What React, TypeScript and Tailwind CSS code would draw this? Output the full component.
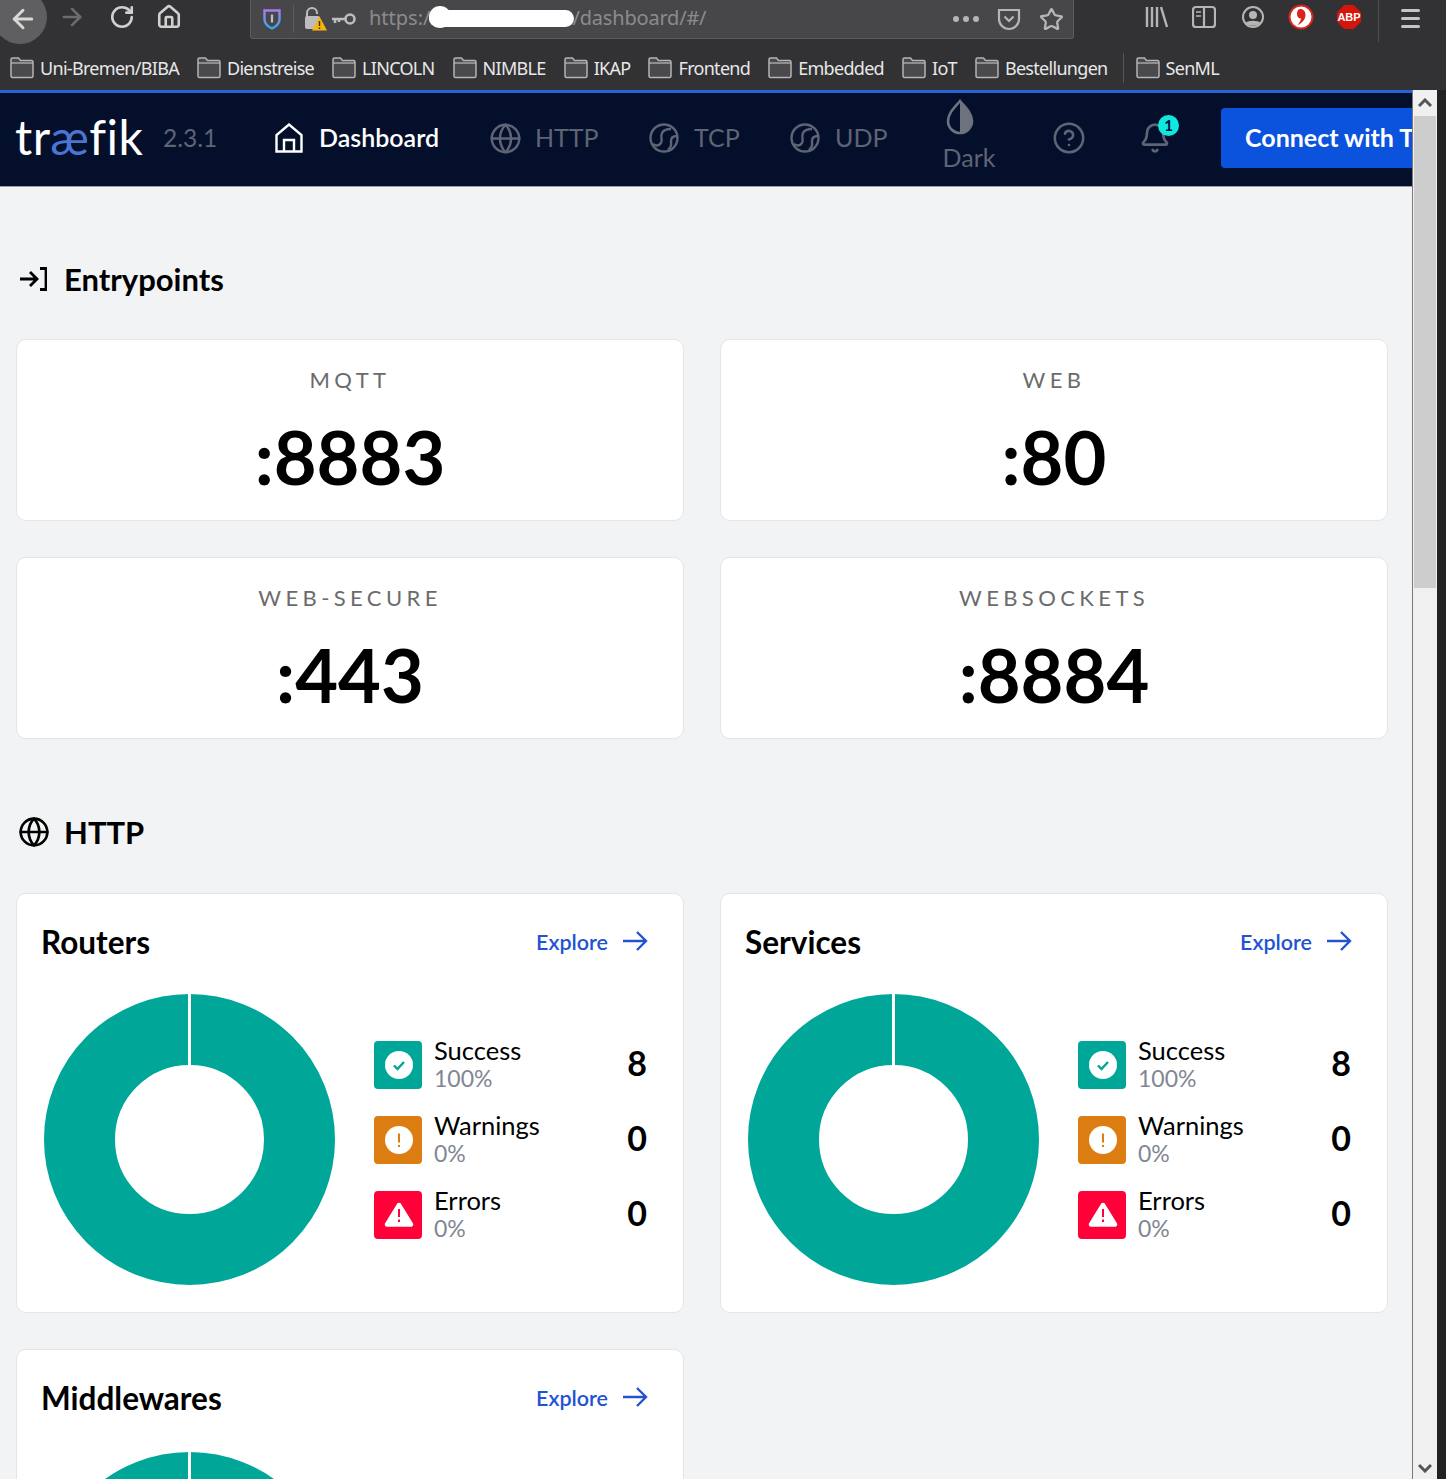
import React from 'react';
import { ArrowLeft, ArrowRight, Bell, CircleHelp, Globe, House, RotateCw, Star } from 'lucide-react';

const BOOKMARKS = ['Uni-Bremen/BIBA', 'Dienstreise', 'LINCOLN', 'NIMBLE', 'IKAP', 'Frontend', 'Embedded', 'IoT', 'Bestellungen'];

function Folder() {
  return (
    <svg width="24" height="22" viewBox="0 0 24 22" fill="none" className="shrink-0">
      <path d="M1 2.500a1.500 1.500 0 0 1 1.500-1.500h6l2 2.500h11a1.500 1.500 0 0 1 1.500 1.500v14a1.500 1.500 0 0 1-1.500 1.500h-19a1.500 1.500 0 0 1-1.500-1.500z" fill="#4a4a4c" stroke="#b4b4b6" strokeWidth="1.500" />
      <path d="M1 6h22" stroke="#b4b4b6" strokeWidth="1.300" />
    </svg>
  );
}

function BrowserBar() {
  return (
    <div className="h-[90px] shrink-0 bg-[#323234] overflow-hidden font-['Noto_Sans',sans-serif]">
      <div className="h-[46px] flex items-start">
        <div className="w-[54px] h-[54px] -ml-[7px] -mt-[10px] rounded-full bg-[#5f5f61] flex items-center justify-center shrink-0">
          <ArrowLeft size={30} color="#d8d8d8" strokeWidth={2.4} className="ml-[6px] mt-[3px]" />
        </div>
        <ArrowRight size={28} color="#6c6c6e" strokeWidth={2.2} className="ml-[11px] mt-[3px] shrink-0" />
        <RotateCw size={26} color="#d0d0d0" strokeWidth={2.4} className="ml-[23px] mt-[4px] shrink-0" />
        <House size={26} color="#d0d0d0" strokeWidth={2.4} className="ml-[21px] mt-[4px] shrink-0" />
        <div className="ml-[68px] w-[824px] h-[39px] shrink-0 bg-[#47474a] border-b border-r border-l border-[#5c5c5e] rounded-b-[3px] flex items-center text-[20px] text-[#8b8b8d]">
          <svg width="20" height="24" viewBox="0 0 20 24" className="ml-[11px] shrink-0">
            <defs>
              <linearGradient id="sh" x1="0" y1="0" x2="0" y2="1">
                <stop offset="0" stopColor="#a67cf0" />
                <stop offset="1" stopColor="#38a8f5" />
              </linearGradient>
            </defs>
            <path d="M2.500 3.500h15v9c0 4-3.500 7-7.500 9-4-2-7.500-5-7.500-9z" fill="none" stroke="url(#sh)" strokeWidth="2.400" />
            <path d="M10 7.500v8" stroke="#b9bfe0" strokeWidth="2.200" />
          </svg>
          <div className="w-px h-[28px] bg-[#5c5c5e] ml-[11px] shrink-0" />
          <svg width="24" height="26" viewBox="0 0 24 26" className="ml-[10px] shrink-0">
            <path d="M3 11V7a5 5 0 0 1 10 0v1" fill="none" stroke="#bdbdbd" strokeWidth="2" />
            <rect x="1" y="10" width="15" height="13" rx="2" fill="#bdbdbd" />
            <path d="M15.500 10.500l7.500 14h-15z" fill="#f8b50e" />
            <path d="M15.500 15v5M15.500 21.500v1.500" stroke="#333" strokeWidth="1.500" />
          </svg>
          <svg width="24" height="14" viewBox="0 0 24 14" className="ml-[4px] shrink-0">
            <circle cx="18" cy="7" r="4.500" fill="none" stroke="#bdbdbd" strokeWidth="2.600" />
            <path d="M0 7h13M3 7v4M7 7v3" stroke="#bdbdbd" strokeWidth="2.600" />
          </svg>
          <span className="ml-[13px] -mt-[2px]">https:/</span>
          <div className="relative w-[145px] h-[17px] rounded-full bg-white shrink-0 -ml-[1px] -mt-[1px]">
            <div className="absolute left-0 -top-[4px] w-[22px] h-[22px] rounded-full bg-white" />
          </div>
          <span className="-ml-[2px] -mt-[2px] tracking-[-0.2px]">/dashboard/#/</span>
          <div className="ml-auto flex gap-[4px]">
            <div className="w-[6px] h-[6px] rounded-full bg-[#b5b5b5]" />
            <div className="w-[6px] h-[6px] rounded-full bg-[#b5b5b5]" />
            <div className="w-[6px] h-[6px] rounded-full bg-[#b5b5b5]" />
          </div>
          <svg width="24" height="24" viewBox="0 0 24 24" fill="none" className="ml-[18px] shrink-0">
            <path d="M2 3h20v9a10 10 0 0 1-20 0z" stroke="#b5b5b5" strokeWidth="2.200" />
            <path d="M7.500 9.500l4.500 4.500 4.500-4.500" stroke="#b5b5b5" strokeWidth="2.200" />
          </svg>
          <Star size={25} color="#b5b5b5" strokeWidth={2.2} className="ml-[18px] mr-[9px] shrink-0" />
        </div>
        <svg width="24" height="24" viewBox="0 0 24 24" fill="none" stroke="#b5b5b5" strokeWidth="2.400" className="ml-[71px] mt-[5px] shrink-0">
          <path d="M2 2v20M7 2v20M12 2v20M16 2l6 20" />
        </svg>
        <svg width="24" height="24" viewBox="0 0 24 24" fill="none" className="ml-[23px] mt-[5px] shrink-0">
          <rect x="1" y="2" width="22" height="20" rx="3" stroke="#b5b5b5" strokeWidth="2.200" />
          <path d="M12 2v20" stroke="#b5b5b5" strokeWidth="2.200" />
          <path d="M4 7h5M4 11h5" stroke="#b5b5b5" strokeWidth="1.600" />
        </svg>
        <svg width="24" height="24" viewBox="0 0 24 24" fill="none" className="ml-[25px] mt-[5px] shrink-0">
          <circle cx="12" cy="12" r="10" stroke="#b5b5b5" strokeWidth="2" />
          <circle cx="12" cy="10" r="4" fill="#b5b5b5" />
          <path d="M4.500 18c2-3 13-3 15 0-2 3.500-13 3.500-15 0z" fill="#b5b5b5" />
        </svg>
        <svg width="26" height="26" viewBox="0 0 26 26" className="ml-[23px] mt-[4px] shrink-0">
          <circle cx="13" cy="13" r="11.500" fill="#fff" stroke="#d8241c" strokeWidth="2" />
          <path d="M12 5c3.500 0 5.500 2.500 5.500 6 0 4-3 8-8 10 2-2.500 3.500-4.500 3.500-6.500-2.500 0-4-1.800-4-4.500S10 5 12 5z" fill="#d8241c" />
        </svg>
        <div className="ml-[23px] mt-[5px] w-[24px] h-[24px] bg-[#d5150b] [clip-path:polygon(30%_0,70%_0,100%_30%,100%_70%,70%_100%,30%_100%,0_70%,0_30%)] flex items-center justify-center text-[11px] font-bold text-white font-['Liberation_Sans',sans-serif] shrink-0">
          ABP
        </div>
        <div className="ml-[17px] w-px h-[42px] bg-[#4e4e50] shrink-0" />
        <div className="ml-[22px] mt-[9px] flex flex-col gap-[5px] shrink-0">
          <div className="w-[19px] h-[3px] rounded-full bg-[#c4c4c4]" />
          <div className="w-[19px] h-[3px] rounded-full bg-[#c4c4c4]" />
          <div className="w-[19px] h-[3px] rounded-full bg-[#c4c4c4]" />
        </div>
      </div>
      <div className="h-[44px] flex items-center pl-[10px] text-[18px] text-[#e8e8e8] tracking-[-0.7px]">
        {BOOKMARKS.map((b) => (
          <div key={b} className="flex items-center gap-[6px] mr-[18px] whitespace-nowrap">
            <Folder />
            <span>{b}</span>
          </div>
        ))}
        <div className="w-px h-[30px] bg-[#555557] -ml-[3px] mr-[12px]" />
        <div className="flex items-center gap-[6px]">
          <Folder />
          <span>SenML</span>
        </div>
      </div>
    </div>
  );
}

function WorldIcon() {
  return (
    <svg width="32" height="32" viewBox="0 0 32 32" fill="none" stroke="#5e6474" strokeWidth="2.400" className="shrink-0">
      <circle cx="16" cy="16" r="13.500" />
      <path d="M5 22c3 2 6 2 8-1s-1-6 1-10 6-4 9-4" />
      <path d="M29 14c-3 0-6 1-6 5s1 5-3 9" />
    </svg>
  );
}

function NavBar() {
  return (
    <div className="h-[94px] pb-[3px] shrink-0 bg-[#040f2b] border-b border-[#9a9ca2] flex items-center overflow-hidden whitespace-nowrap text-[25px] text-[#5e6474]">
      <div className="ml-[15px] w-[128px] text-[48px] leading-none font-normal text-white tracking-[0.5px] -mt-[2px] shrink-0">
        tr<span className="text-[#4a75d3]">æ</span>fik
      </div>
      <div className="ml-[20px] w-[57px] text-[24.500px] shrink-0">2.3.1</div>
      <svg width="28" height="30" viewBox="0 0 28 30" fill="none" stroke="#fff" strokeWidth="2.400" className="ml-[55px] shrink-0">
        <path d="M1.500 28.500V12L14 1.500 26.500 12v16.500zM9 28.500V17h10v11.500" />
      </svg>
      <div className="ml-[16px] w-[120px] font-semibold text-white shrink-0">Dashboard</div>
      <Globe size={33} color="#5e6474" strokeWidth={1.800} className="ml-[50px] shrink-0" />
      <div className="ml-[13px] w-[64px] shrink-0">HTTP</div>
      <div className="ml-[49px]"><WorldIcon /></div>
      <div className="ml-[14px] w-[46px] shrink-0">TCP</div>
      <div className="ml-[49px]"><WorldIcon /></div>
      <div className="ml-[14px] w-[51px] shrink-0">UDP</div>
      <div className="ml-[57px] w-[52px] flex flex-col items-center shrink-0 -mt-[5px]">
        <svg width="30" height="36" viewBox="0 0 30 36" className="-ml-[18px]">
          <path d="M15 2c5 6 12 12 12 20a12 12 0 0 1-24 0C3 14 10 8 15 2z" fill="none" stroke="#6d727f" strokeWidth="2.600" />
          <path d="M15 2c5 6 12 12 12 20a12 12 0 0 1-12 12z" fill="#6d727f" />
        </svg>
        <span className="mt-[7px] leading-[30px]">Dark</span>
      </div>
      <CircleHelp size={34} color="#5e6474" strokeWidth={1.800} className="ml-[57px] shrink-0" />
      <div className="ml-[53px] relative shrink-0">
        <Bell size={32} color="#5e6474" strokeWidth={2} />
        <div className="absolute -top-[7px] left-[19px] w-[21px] h-[21px] rounded-full bg-[#0ee8e0] text-[#040f2b] text-[15px] font-bold flex items-center justify-center">1</div>
      </div>
      <div className="ml-[50px] h-[60px] w-[240px] rounded-[4px] bg-[#0b52dc] text-white font-bold text-[25px] flex items-center pl-[24px] shrink-0">
        Connect with Traefik
      </div>
    </div>
  );
}

function EntryCard({ name, port }: { name: string; port: string }) {
  return (
    <div className="h-[182px] bg-white border border-[#e3e5e8] rounded-[10px] flex flex-col items-center">
      <div className="mt-[25px] text-[22px] leading-[30px] tracking-[0.2em] text-[#6b6b6b]">{name}</div>
      <div className="mt-[17px] text-[74px] leading-[90px] font-bold text-black">{port}</div>
    </div>
  );
}

function Donut() {
  return (
    <svg width="291" height="291" viewBox="0 0 291 291" className="shrink-0">
      <circle cx="145.500" cy="145.500" r="110" fill="none" stroke="#00a697" strokeWidth="71" />
      <path d="M145.500 0v72" stroke="#fff" strokeWidth="3" />
    </svg>
  );
}

function StatRow({ label, pct, count, kind }: { label: string; pct: string; count: number; kind: 'ok' | 'warn' | 'err' }) {
  return (
    <div className="h-[48px] flex items-center">
      {kind === 'ok' && (
        <div className="w-[48px] h-[48px] pl-[2px] pt-[1px] rounded-[4px] bg-[#00a697] flex items-center justify-center shrink-0">
          <svg width="28" height="28" viewBox="0 0 28 28">
            <circle cx="14" cy="14" r="14" fill="#fff" />
            <path d="M9 14.500l3.500 3.500 6.500-7" fill="none" stroke="#00a697" strokeWidth="2.400" />
          </svg>
        </div>
      )}
      {kind === 'warn' && (
        <div className="w-[48px] h-[48px] pl-[2px] pt-[1px] rounded-[4px] bg-[#db7d11] flex items-center justify-center shrink-0">
          <svg width="28" height="28" viewBox="0 0 28 28">
            <circle cx="14" cy="14" r="14" fill="#fff" />
            <path d="M14 7.500v9M14 19v2" fill="none" stroke="#db7d11" strokeWidth="2" />
          </svg>
        </div>
      )}
      {kind === 'err' && (
        <div className="w-[48px] h-[48px] pl-[2px] rounded-[4px] bg-[#ff0039] flex items-center justify-center shrink-0">
          <svg width="32" height="28" viewBox="0 0 32 28">
            <path d="M16 4 28 23.500H4z" fill="#fff" stroke="#fff" strokeWidth="4.500" strokeLinejoin="round" />
            <path d="M16 8v8M16 18.500v2.500" fill="none" stroke="#ff0039" strokeWidth="2" />
          </svg>
        </div>
      )}
      <div className="ml-[12px] flex-1">
        <div className="text-[25.500px] leading-[28px] -mt-[2px] text-black">{label}</div>
        <div className="text-[23px] leading-[28px] text-[#7f8793]">{pct}</div>
      </div>
      <div className="text-[34px] font-bold text-black -mt-[4px]">{count}</div>
    </div>
  );
}

function StatCard({ title, lower }: { title: string; lower?: boolean }) {
  return (
    <div className="h-[420px] bg-white border border-[#e3e5e8] rounded-[10px] px-[24px]">
      <div className={lower ? 'h-[102px] pb-[5px] flex items-center justify-between' : 'h-[100px] pb-[3px] flex items-center justify-between'}>
        <div className="text-[31.500px] font-bold text-black">{title}</div>
        <div className="flex items-center gap-[14px] mr-[11px] -mt-[1px] text-[21.500px] font-semibold text-[#2153d3]">
          Explore
          <svg width="26" height="22" viewBox="0 0 26 22" fill="none" stroke="#2153d3" strokeWidth="2.400" className="-mt-[2px]">
            <path d="M1 11h23M15 2l9 9-9 9" />
          </svg>
        </div>
      </div>
      <div className="flex items-center">
        <div className="ml-[3px]">
          <Donut />
        </div>
        <div className="ml-[39px] flex-1 flex flex-col gap-[27px] mr-[12px]">
          <StatRow label="Success" pct="100%" count={8} kind="ok" />
          <StatRow label="Warnings" pct="0%" count={0} kind="warn" />
          <StatRow label="Errors" pct="0%" count={0} kind="err" />
        </div>
      </div>
    </div>
  );
}

function SectionHead({ title, icon }: { title: string; icon: React.ReactNode }) {
  return (
    <div className="h-[40px] flex items-center text-black text-[31px] font-bold">
      <div className="w-[48px] flex items-center pl-[3px]">{icon}</div>
      {title}
    </div>
  );
}

export default function App() {
  return (
    <div className="w-[1446px] h-[1479px] overflow-hidden flex flex-col bg-[#222] font-['Lato',sans-serif]">
      <BrowserBar />
      <div className="flex-1 min-h-0 flex">
        <div className="w-[1413px] border-r border-[#7a7a7a] flex flex-col min-w-0 overflow-hidden bg-[#f1f3f5]">
          <div className="h-[3px] bg-[#2563d8] shrink-0" />
          <NavBar />
          <div className="pl-[16px] pr-[24px] pt-[72px]">
            <SectionHead
              title="Entrypoints"
              icon={
                <svg width="28" height="24" viewBox="0 0 28 24" fill="none" stroke="#000" strokeWidth="2.800">
                  <path d="M1 12h16M11 5l7 7-7 7" />
                  <path d="M21 1.500h6v21h-6" />
                </svg>
              }
            />
            <div className="mt-[40px] grid grid-cols-2 gap-[36px]">
              <EntryCard name="MQTT" port=":8883" />
              <EntryCard name="WEB" port=":80" />
              <EntryCard name="WEB-SECURE" port=":443" />
              <EntryCard name="WEBSOCKETS" port=":8884" />
            </div>
            <div className="mt-[73px]">
              <SectionHead title="HTTP" icon={<Globe size={32} color="#000" strokeWidth={2} className="-ml-[1px]" />} />
            </div>
            <div className="mt-[41px] grid grid-cols-2 gap-[36px]">
              <StatCard title="Routers" />
              <StatCard title="Services" />
              <StatCard title="Middlewares" lower />
            </div>
          </div>
        </div>
        <div className="w-[24px] shrink-0 bg-[#f0f0f0] flex flex-col">
          <div className="h-[26px] flex items-center justify-center text-[#555]">
            <svg width="14" height="10" viewBox="0 0 14 10" fill="none" stroke="#555" strokeWidth="3"><path d="M1 8l6-6 6 6" /></svg>
          </div>
          <div className="mx-[1px] h-[472px] bg-[#cdcdcd]" />
          <div className="mt-auto h-[22px] flex items-center justify-center">
            <svg width="14" height="10" viewBox="0 0 14 10" fill="none" stroke="#555" strokeWidth="3"><path d="M1 2l6 6 6-6" /></svg>
          </div>
        </div>
        <div className="w-[9px] shrink-0 bg-[#222]" />
      </div>
    </div>
  );
}
